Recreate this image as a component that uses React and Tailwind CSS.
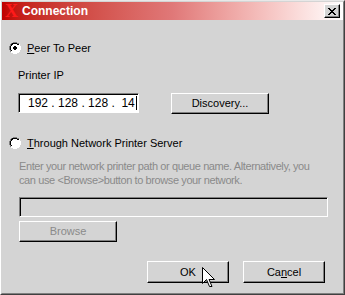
import React from 'react';

const raised =
  'border border-t-white border-l-white border-r-black border-b-black shadow-[inset_-1px_-1px_#808080]';
const sunken =
  'border border-t-[#808080] border-l-[#808080] border-r-white border-b-white shadow-[inset_1px_1px_#000]';

function Radio({ checked }) {
  return (
    <svg width="12" height="12" viewBox="0 0 12 12" className="shrink-0">
      <path d="M4 0h4v1h2v1h1v2h1v4h-1v2h-1v1h-2v1h-4v-1h-2v-1h-1v-2h-1v-4h1v-2h1v-1h2z" fill="#ffffff" />
      <path d="M4 0h4v1h2v1h-2v-1h-4v1h-2v2h-1v4h1v2h-1v-2h-1v-4h1v-2h1v-1h2z" fill="#808080" />
      <path d="M4 1h4v1h2v1h-2v-1h-4v1h-1v1h-1v4h1v1h-1v-1h-1v-4h1v-2h1v-1h1z" fill="#000000" />
      <path d="M10 2h1v2h1v4h-1v2h-1v1h-2v1h-4v-1h4v-1h2v-2h1v-4h-1z" fill="#ffffff" />
      {checked && <path d="M5 4h2v1h1v2h-1v1h-2v-1h-1v-2h1z" fill="#000" />}
    </svg>
  );
}

export default function App() {
  return (
    <div
      className="w-[345px] h-[295px] bg-[#d4d4d4] border border-t-[#e8e8e8] border-l-white border-r-[#404040] border-b-[#404040] text-[11px] text-black overflow-hidden"
      style={{ fontFamily: '"Liberation Sans", Arial, sans-serif' }}
    >
      <div className="h-full border border-r-[#808080] border-b-[#808080] border-t-[#d4d4d4] border-l-[#d4d4d4] flex flex-col">
        {/* Barra de título */}
        <div className="h-[18px] bg-gradient-to-r from-[#c00000] via-[#e07878] to-white flex items-center pl-[3px] pr-[3px]">
          <span
            className="text-[#ff1a1a] font-bold text-[18px] leading-none mr-[4px]"
            style={{ fontFamily: '"Liberation Serif", serif' }}
          >
            X
          </span>
          <span className="text-white font-bold text-[12px] leading-none">Connection</span>
          <div className={`ml-auto w-[16px] h-[14px] bg-[#d4d4d4] flex items-center justify-center ${raised}`}>
            <svg width="8" height="7" viewBox="0 0 8 7">
              <path d="M0 0h2v1h1v1h2v-1h1v-1h2v1h-1v1h-1v1h-1v1h1v1h1v1h1v1h-2v-1h-1v-1h-2v1h-1v1h-2v-1h1v-1h1v-1h1v-1h-1v-1h-1v-1h-1z" fill="#000" />
            </svg>
          </div>
        </div>

        {/* Contenido */}
        <div className="flex flex-col pl-[7px] pt-[21px]">
          <div className="flex items-center gap-[6px] h-[14px]">
            <Radio checked />
            <span><span className="underline">P</span>eer To Peer</span>
          </div>
          <div className="ml-[9px] mt-[13px] h-[14px] leading-[14px]">Printer IP</div>
          <div className="flex ml-[9px] mt-[11px] items-start">
            <div className={`w-[121px] h-[20px] bg-white flex items-center pl-[9px] text-[12px] ${sunken}`}>
              <span className="whitespace-pre">192 . 128 . 128 .  14</span>
              <span className="w-[1px] h-[14px] bg-black ml-[1px]" />
            </div>
            <button className={`ml-[32px] w-[98px] h-[21px] bg-[#d4d4d4] ${raised}`}>Discovery...</button>
          </div>

          <div className="flex items-center gap-[6px] h-[14px] mt-[22px]">
            <Radio />
            <span><span className="underline">T</span>hrough Network Printer Server</span>
          </div>
          <div className="ml-[10px] mt-[9px] text-[#8a8a8a] leading-[14px] tracking-[-0.4px] w-[306px]">
            Enter your network printer path or queue name. Alternatively, you can use &lt;Browse&gt;button to browse your network.
          </div>
          <div className={`ml-[10px] mt-[10px] w-[309px] h-[20px] bg-[#d4d4d4] ${sunken}`} />
          <button className={`ml-[10px] mt-[4px] w-[98px] h-[21px] bg-[#d4d4d4] text-[#8a8a8a] ${raised}`}>
            Browse
          </button>

          <div className="flex ml-[138px] mt-[19px] gap-[14px]">
            <button className={`relative w-[82px] h-[22px] bg-[#d4d4d4] ${raised}`}>
              OK
              <svg
                width="13"
                height="22"
                viewBox="0 0 13 22"
                className="absolute left-[54px] top-[5px]"
              >
                <path d="M0.5 0.5v16l4-4 3 7h2.5l-3-7h5.5z" fill="#fff" stroke="#000" strokeWidth="1" />
              </svg>
            </button>
            <button className={`w-[82px] h-[22px] bg-[#d4d4d4] ${raised}`}>
              Ca<span className="underline">n</span>cel
            </button>
          </div>
        </div>
      </div>
    </div>
  );
}
